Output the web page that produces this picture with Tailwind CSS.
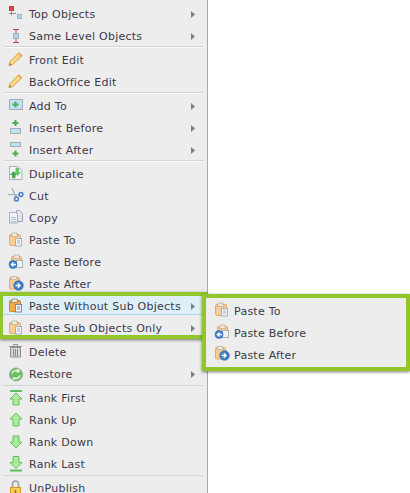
<!DOCTYPE html>
<html lang="en">
<head>
  <meta charset="UTF-8" />
  <title>Context Menu</title>
  <script src="https://cdn.jsdelivr.net/npm/@tailwindcss/browser@4"></script>
</head>
<body class="relative w-[410px] h-[493px] overflow-hidden bg-white font-['DejaVu_Sans',sans-serif] text-[11px] tracking-[0.25px] text-[#3a3a4a]">

  <!-- icon sheet -->
  <svg class="hidden">
    <symbol id="i-top" viewBox="0 0 16 16">
      <rect x="1.500" y="0.500" width="4" height="4" fill="#d8474f" stroke="#c04048"/>
      <path d="M1 7.500h7M3.500 5.500v4" stroke="#8a8f94" fill="none"/>
      <rect x="9.500" y="8.500" width="4" height="4" fill="#a9d8f0" stroke="#a9b1b8"/>
    </symbol>
    <symbol id="i-same" viewBox="0 -2 16 16">
      <path d="M5 -0.500h6M8 -0.500v13M5 12.500h6" stroke="#c8474f" fill="none"/>
      <rect x="5.500" y="3.500" width="5" height="5" fill="#a9d8f0" stroke="#a9b1b8"/>
    </symbol>
    <symbol id="i-pencil" viewBox="0 0 16 16">
      <path d="M1 13.500l1-4L11 .7l3 3L4.500 12.500z" fill="#fbd98a" stroke="#d89a3a"/>
      <path d="M1 13.500l.7-2.500 1.800 1.800z" fill="#a08050"/>
      <path d="M10.500 1.500l3 3" stroke="#eba860" stroke-width="1.400"/>
    </symbol>
    <symbol id="i-add" viewBox="0 0 16 16">
      <rect x="1.500" y="1.500" width="13" height="10" fill="#bfe3f4" stroke="#a3adb4"/>
      <path d="M7.500 3.500v6M4.500 6.500h6" stroke="#4fae4a" stroke-width="2"/>
    </symbol>
    <symbol id="i-before" viewBox="0 0 16 16">
      <path d="M7.500 0v6M4.500 3h6" stroke="#4fae4a" stroke-width="2"/>
      <rect x="2.500" y="8.500" width="10" height="5" fill="#bfe3f4" stroke="#a3adb4"/>
    </symbol>
    <symbol id="i-after" viewBox="0 0 16 16">
      <rect x="2.500" y="0.500" width="10" height="4" fill="#bfe3f4" stroke="#a3adb4"/>
      <path d="M7.500 8.500v6M4.500 11.500h6" stroke="#4fae4a" stroke-width="2"/>
    </symbol>
    <symbol id="i-dup" viewBox="0 0 16 16">
      <path d="M1.500 .5h8l4.500 4v9H1.500z" fill="#f4f6f8" stroke="#a8b0c0"/>
      <path d="M5.500 5 2 9h2v3c1 .5 2.500.5 3.500 0V9h1.500z" fill="#45a84c"/>
      <path d="M9.500 10 13 6h-2V2c-1-.5-2.500-.5-3.500 0v4H6z" fill="#62c868"/>
    </symbol>
    <symbol id="i-cut" viewBox="0 0 16 16">
      <path d="M4 0l4 9M0 6.500l11 .500" stroke="#a0a6b0" stroke-width="1.200" fill="none"/>
      <circle cx="13" cy="6.500" r="1.900" fill="none" stroke="#4a80c8" stroke-width="1.500"/>
      <circle cx="8.500" cy="11" r="1.900" fill="none" stroke="#4a80c8" stroke-width="1.500"/>
    </symbol>
    <symbol id="i-copy" viewBox="0 0 16 16">
      <path d="M8.500 .5h3l3 3v8h-6z" fill="#e4e0f0" stroke="#a8a4c0"/>
      <path d="M1.500 2.500h6l2 2v8.500h-8z" fill="#f0f2f8" stroke="#a8b0c8"/>
      <path d="M3 7.500h5M3 9.500h5M3 11.500h5" stroke="#b8c0d0"/>
    </symbol>
    <symbol id="i-paste" viewBox="0 0 16 16">
      <rect x="1.500" y="2.500" width="11" height="11" rx="1.500" fill="#f9cd98" stroke="#e8aa68"/>
      <path d="M4 3V1h5v2h1v1.500H3V3z" fill="#efe9dc" stroke="#b9a98c" stroke-width=".7"/>
      <rect x="7.500" y="6.500" width="6" height="7.500" fill="#f2f3f6" stroke="#aab0ba"/>
      <path d="M9 9h3M9 11h3" stroke="#aab0ba"/>
    </symbol>
    <symbol id="i-paste-on" viewBox="0 0 16 16">
      <rect x="1.500" y="2.500" width="11" height="11" rx="1.500" fill="#f5a94e" stroke="#d98420"/>
      <path d="M4 3V1h5v2h1v1.500H3V3z" fill="#efe9dc" stroke="#8a7a58" stroke-width=".7"/>
      <rect x="7.500" y="6.500" width="6" height="7.500" fill="#f2f3f6" stroke="#808894"/>
      <path d="M9 9h3M9 11h3" stroke="#808894"/>
    </symbol>
    <symbol id="i-paste-before" viewBox="0 0 16 16">
      <rect x="3.500" y="2.500" width="10" height="9" rx="1" fill="#f9cd98" stroke="#e8aa68"/>
      <path d="M6 3V1h5v2h1v1.500H5V3z" fill="#efe9dc" stroke="#b9a98c" stroke-width=".7"/>
      <rect x="8.500" y="6.500" width="6" height="7" fill="#f2f3f6" stroke="#aab0ba"/>
      <circle cx="5" cy="10.500" r="4" fill="#3f7fc8" stroke="#2a62a8" stroke-width=".6"/>
      <path d="M8 10.500H4M5.500 8.500 3.300 10.500l2.200 2" stroke="#fff" stroke-width="1.300" fill="none"/>
    </symbol>
    <symbol id="i-paste-after" viewBox="0 0 16 16">
      <rect x="1.500" y="1.500" width="10" height="11.500" rx="1" fill="#f9cd98" stroke="#e8aa68"/>
      <path d="M3.500 2V.5h5V2h1v1.500h-7V2z" fill="#efe9dc" stroke="#b9a98c" stroke-width=".7"/>
      <circle cx="10.500" cy="9.500" r="4.800" fill="#3f7fc8" stroke="#2a62a8" stroke-width=".6"/>
      <path d="M7.500 9.500h4M9.800 7.300l2.200 2.200-2.200 2.200" stroke="#fff" stroke-width="1.400" fill="none"/>
    </symbol>
    <symbol id="i-trash" viewBox="0 0 16 16">
      <path d="M1 2.500h13M5.500 2V.5h4V2" stroke="#8f8f8f" fill="none"/>
      <path d="M2.500 3.500h10v9.500h-10z" fill="#d8d8d8" stroke="#8f8f8f"/>
      <path d="M5.500 5v7M7.500 5v7M9.500 5v7" stroke="#8a8a8a"/>
    </symbol>
    <symbol id="i-restore" viewBox="0 0 16 16">
      <circle cx="8" cy="8.500" r="6.500" fill="#6cc05c" stroke="#8fa8a0"/>
      <path d="M4 7.500c1-3 5-4 7-2M12 9.500c-1 3-5 4-7 2M7.500 11.500 4.500 14M10 3l1 2.500L8.500 6" stroke="#e8f6e4" stroke-width="1.500" fill="none"/>
    </symbol>
    <symbol id="i-first" viewBox="0 -1 16 16">
      <path d="M2 0h12" stroke="#5cc060" stroke-width="2"/>
      <path d="M8 2l6 6h-3v6H5V8H2z" fill="#a8ec98" stroke="#68c060"/>
    </symbol>
    <symbol id="i-up" viewBox="0 0 16 16">
      <path d="M8 1l6 6h-3v7H5V7H2z" fill="#a8ec98" stroke="#68c060"/>
    </symbol>
    <symbol id="i-down" viewBox="0 0 16 16">
      <path d="M8 14l6-6h-3V2H5v6H2z" fill="#a8ec98" stroke="#68c060"/>
    </symbol>
    <symbol id="i-last" viewBox="0 0 16 16">
      <path d="M8 12.500l6-6h-3V.5H5v6H2z" fill="#a8ec98" stroke="#68c060"/>
      <path d="M2 14.500h12" stroke="#5cc060" stroke-width="2"/>
    </symbol>
    <symbol id="i-lock" viewBox="0 -2 16 16">
      <path d="M4.500 5V2a3 3 0 0 1 6 0v3" fill="none" stroke="#a0a0a0" stroke-width="1.600"/>
      <rect x="2.500" y="5.500" width="10" height="9" fill="#f5cf50" stroke="#d09a28"/>
      <path d="M7.500 8v3" stroke="#9a6a20" stroke-width="1.500"/>
    </symbol>
    <symbol id="i-arrow" viewBox="0 0 4 7">
      <path d="M0 0l4 3.500L0 7z" fill="#7a7f84"/>
    </symbol>
  </svg>

  <!-- main menu -->
  <div class="w-[208px] h-[493px] bg-[#ededed] border-r border-[#a8a8a8] pt-[2px]">

    <div class="flex items-center h-[22px] pl-2 pt-[2px] gap-[5px]"><svg class="w-4 h-4"><use href="#i-top"/></svg><span class="flex-1 pt-[2px]">Top Objects</span><svg class="w-[4px] h-[7px] mr-3"><use href="#i-arrow"/></svg></div>
    <div class="flex items-center h-[22px] pl-2 pt-[2px] gap-[5px]"><svg class="w-4 h-4"><use href="#i-same"/></svg><span class="flex-1 pt-[2px]">Same Level Objects</span><svg class="w-[4px] h-[7px] mr-3"><use href="#i-arrow"/></svg></div>
    <div class="h-[2px] w-[200px] ml-[3px] bg-[#d4d4d4] border-b border-[#f8f8f8]"></div>

    <div class="flex items-center h-[22px] pl-2 pt-[2px] gap-[5px]"><svg class="w-4 h-4"><use href="#i-pencil"/></svg><span class="pt-[2px]">Front Edit</span></div>
    <div class="flex items-center h-[22px] pl-2 pt-[2px] gap-[5px]"><svg class="w-4 h-4"><use href="#i-pencil"/></svg><span class="pt-[2px]">BackOffice Edit</span></div>
    <div class="h-[2px] w-[200px] ml-[3px] bg-[#d4d4d4] border-b border-[#f8f8f8]"></div>

    <div class="flex items-center h-[22px] pl-2 pt-[2px] gap-[5px]"><svg class="w-4 h-4"><use href="#i-add"/></svg><span class="flex-1 pt-[2px]">Add To</span><svg class="w-[4px] h-[7px] mr-3"><use href="#i-arrow"/></svg></div>
    <div class="flex items-center h-[22px] pl-2 pt-[2px] gap-[5px]"><svg class="w-4 h-4"><use href="#i-before"/></svg><span class="flex-1 pt-[2px]">Insert Before</span><svg class="w-[4px] h-[7px] mr-3"><use href="#i-arrow"/></svg></div>
    <div class="flex items-center h-[22px] pl-2 pt-[2px] gap-[5px]"><svg class="w-4 h-4"><use href="#i-after"/></svg><span class="flex-1 pt-[2px]">Insert After</span><svg class="w-[4px] h-[7px] mr-3"><use href="#i-arrow"/></svg></div>
    <div class="h-[2px] w-[200px] ml-[3px] bg-[#d4d4d4] border-b border-[#f8f8f8]"></div>

    <div class="flex items-center h-[22px] pl-2 pt-[2px] gap-[5px]"><svg class="w-4 h-4"><use href="#i-dup"/></svg><span class="pt-[2px]">Duplicate</span></div>
    <div class="flex items-center h-[22px] pl-2 pt-[2px] gap-[5px]"><svg class="w-4 h-4"><use href="#i-cut"/></svg><span class="pt-[2px]">Cut</span></div>
    <div class="flex items-center h-[22px] pl-2 pt-[2px] gap-[5px]"><svg class="w-4 h-4"><use href="#i-copy"/></svg><span class="pt-[2px]">Copy</span></div>
    <div class="flex items-center h-[22px] pl-2 pt-[2px] gap-[5px]"><svg class="w-4 h-4"><use href="#i-paste"/></svg><span class="pt-[2px]">Paste To</span></div>
    <div class="flex items-center h-[22px] pl-2 pt-[2px] gap-[5px]"><svg class="w-4 h-4"><use href="#i-paste-before"/></svg><span class="pt-[2px]">Paste Before</span></div>
    <div class="flex items-center h-[22px] pl-2 pt-[2px] gap-[5px]"><svg class="w-4 h-4"><use href="#i-paste-after"/></svg><span class="pt-[2px]">Paste After</span></div>

    <div class="flex items-center h-[21px] pl-2 pt-[4px] gap-[5px] bg-[#dfeff7] border-b border-[#a9dbe9]"><svg class="w-4 h-4"><use href="#i-paste-on"/></svg><span class="flex-1 pt-[2px]">Paste Without Sub Objects</span><svg class="w-[4px] h-[7px] mr-3"><use href="#i-arrow"/></svg></div>
    <div class="flex items-center h-[23px] pl-2 pt-[3px] mb-[2px] gap-[5px]"><svg class="w-4 h-4"><use href="#i-paste"/></svg><span class="flex-1 pt-[2px]">Paste Sub Objects Only</span><svg class="w-[4px] h-[7px] mr-3"><use href="#i-arrow"/></svg></div>

    <div class="flex items-center h-[22px] pl-2 pt-[2px] gap-[5px]"><svg class="w-4 h-4"><use href="#i-trash"/></svg><span class="pt-[2px]">Delete</span></div>
    <div class="flex items-center h-[22px] pl-2 pt-[2px] gap-[5px]"><svg class="w-4 h-4"><use href="#i-restore"/></svg><span class="flex-1 pt-[2px]">Restore</span><svg class="w-[4px] h-[7px] mr-3"><use href="#i-arrow"/></svg></div>
    <div class="h-[2px] w-[200px] ml-[3px] border-b border-[#d4d4d4]"></div>

    <div class="flex items-center h-[22px] pl-2 pt-[2px] gap-[5px]"><svg class="w-4 h-4"><use href="#i-first"/></svg><span class="pt-[2px]">Rank First</span></div>
    <div class="flex items-center h-[22px] pl-2 pt-[2px] gap-[5px]"><svg class="w-4 h-4"><use href="#i-up"/></svg><span class="pt-[2px]">Rank Up</span></div>
    <div class="flex items-center h-[22px] pl-2 pt-[2px] gap-[5px]"><svg class="w-4 h-4"><use href="#i-down"/></svg><span class="pt-[2px]">Rank Down</span></div>
    <div class="flex items-center h-[22px] pl-2 pt-[2px] gap-[5px]"><svg class="w-4 h-4"><use href="#i-last"/></svg><span class="pt-[2px]">Rank Last</span></div>
    <div class="h-[2px] w-[200px] ml-[3px] border-b border-[#d4d4d4]"></div>

    <div class="flex items-center h-[22px] pl-2 pt-[2px] gap-[5px]"><svg class="w-4 h-4"><use href="#i-lock"/></svg><span class="pt-[2px]">UnPublish</span></div>
  </div>

  <!-- green highlight frame over the two paste rows -->
  <div class="absolute left-0 top-[292px] w-[207px] h-[47px] border-4 border-l-[3px] border-[#92c72c] shadow-[0_1px_3px_rgba(0,0,0,0.5)]"></div>

  <!-- submenu -->
  <div class="absolute left-[202px] top-[294px] w-[208px] h-[77px] border-4 border-[#92c72c] bg-[#ededed] shadow-[0_1px_3px_rgba(0,0,0,0.5)]">
    <div class="flex items-center h-[22px] pl-2 pt-[2px] gap-[4px]"><svg class="w-4 h-4"><use href="#i-paste"/></svg><span class="pt-[4px]">Paste To</span></div>
    <div class="flex items-center h-[22px] pl-2 pt-[2px] gap-[4px]"><svg class="w-4 h-4"><use href="#i-paste-before"/></svg><span class="pt-[4px]">Paste Before</span></div>
    <div class="flex items-center h-[22px] pl-2 pt-[2px] gap-[4px]"><svg class="w-4 h-4"><use href="#i-paste-after"/></svg><span class="pt-[4px]">Paste After</span></div>
  </div>

</body>
</html>
